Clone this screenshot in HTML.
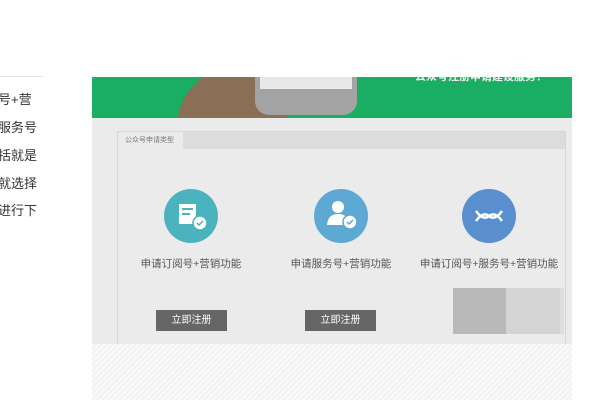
<!DOCTYPE html>
<html><head><meta charset="utf-8"><style>
*{margin:0;padding:0;box-sizing:border-box}
body{width:600px;height:400px;background:#fff;position:relative;overflow:hidden;font-family:"Liberation Sans","Noto Sans CJK SC",sans-serif}
.abs{position:absolute}
.lt{left:-2px;font-size:13px;color:#333;white-space:nowrap}
.circ{width:54px;height:54px;border-radius:50%}
.lab{font-size:10.5px;color:#555;white-space:nowrap;text-align:center;width:160px}
.btn{width:71px;height:21px;background:#666;color:#fff;font-size:10px;text-align:center;line-height:21px}
</style></head><body>
<div class="abs" style="left:0;top:76px;width:43px;height:1px;background:#e5e5e5"></div>
<div class="abs lt" style="top:89px">号+营</div>
<div class="abs lt" style="top:117px">服务号</div>
<div class="abs lt" style="top:145px">括就是</div>
<div class="abs lt" style="top:173px">就选择</div>
<div class="abs lt" style="top:200px">进行下</div>

<div class="abs" style="left:92px;top:77px;width:480px;height:41px;background:#1aae64;overflow:hidden">
  <div class="abs" style="left:85px;top:-10px;width:110px;height:70px;background:#8a6e55;border-radius:60px 0 0 0"></div>
  <div class="abs" style="left:163px;top:-10px;width:102px;height:48px;background:#a3a3a3;border-radius:0 0 14px 14px"></div>
  <div class="abs" style="left:168px;top:-10px;width:92px;height:22px;background:#e8e8e8"></div>
  <div class="abs" style="left:323px;top:-9px;width:160px;font-size:11px;font-weight:bold;color:#eee;white-space:nowrap">公众号注册申请建设服务！</div>
</div>
<div class="abs" style="left:92px;top:118px;width:480px;height:226px;background:#ebebeb"></div>
<div class="abs" style="left:117px;top:131px;width:449px;height:213px;border:1px solid #d6d6d6;border-bottom:none"></div>
<div class="abs" style="left:118px;top:132px;width:447px;height:17px;background:#dcdcdc"></div>
<div class="abs" style="left:118px;top:132px;width:65px;height:17px;background:#ebebeb;font-size:7px;color:#777;line-height:17px;padding-left:7px">公众号申请类型</div>

<div class="abs circ" style="left:164px;top:189px;background:#4bb3bd"></div>
<div class="abs circ" style="left:314px;top:189px;background:#5ea8d4"></div>
<div class="abs circ" style="left:462px;top:189px;background:#5a8fcf"></div>
<svg class="abs" style="left:164px;top:189px" width="54" height="54"><rect x="15" y="15" width="17" height="20" fill="#fff"/><rect x="18" y="19" width="11" height="2" fill="#4bb3bd"/><rect x="18" y="24" width="8" height="2" fill="#4bb3bd"/><circle cx="36" cy="34" r="7" fill="#fff" stroke="#4bb3bd" stroke-width="1.5"/><path d="M33 34l2 2 4-4" stroke="#4bb3bd" stroke-width="1.5" fill="none"/></svg>
<svg class="abs" style="left:314px;top:189px" width="54" height="54"><circle cx="24" cy="18" r="6" fill="#fff"/><path d="M13 36q1-11 11-11q8 0 10 6v5z" fill="#fff"/><circle cx="36" cy="33" r="7" fill="#fff" stroke="#5ea8d4" stroke-width="1.5"/><path d="M33 33l2 2 4-4" stroke="#5ea8d4" stroke-width="1.5" fill="none"/></svg>
<svg class="abs" style="left:462px;top:189px" width="54" height="54"><path d="M14 22q7 10 13 5t13 5M14 32q7-10 13-5t13-5" stroke="#fff" stroke-width="2.5" fill="none"/></svg>

<div class="abs lab" style="left:111px;top:256px">申请订阅号+营销功能</div>
<div class="abs lab" style="left:261px;top:256px">申请服务号+营销功能</div>
<div class="abs lab" style="left:409px;top:256px">申请订阅号+服务号+营销功能</div>
<div class="abs btn" style="left:156px;top:310px">立即注册</div>
<div class="abs btn" style="left:305px;top:310px">立即注册</div>
<div class="abs" style="left:453px;top:288px;width:53px;height:46px;background:#b9b9b9"></div>
<div class="abs" style="left:506px;top:288px;width:54px;height:46px;background:#d4d4d4"></div>
<div class="abs" style="left:560px;top:288px;width:4px;height:46px;background:#dedede"></div>
<div class="abs" style="left:92px;top:344px;width:480px;height:56px;background:repeating-linear-gradient(135deg,#fafafa 0 2px,#f2f2f2 2px 4px)"></div>
</body></html>
